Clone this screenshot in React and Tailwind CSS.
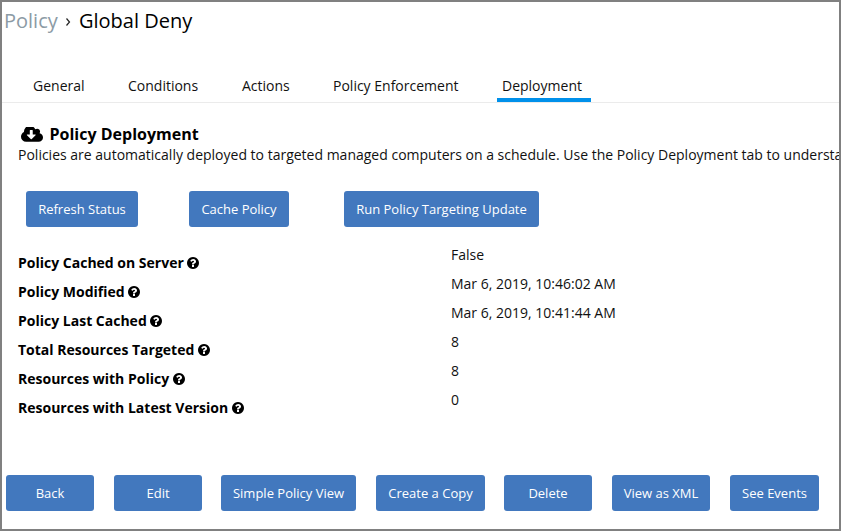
const tabs = [
  { label: "General", box: "w-[95px]" },
  { label: "Conditions", box: "w-[114px]" },
  { label: "Actions", box: "w-[91px]" },
  { label: "Policy Enforcement", box: "w-[169px]" },
  { label: "Deployment", box: "w-[94px]", active: true },
];

const details = [
  ["Policy Cached on Server", "False"],
  ["Policy Modified", "Mar 6, 2019, 10:46:02 AM"],
  ["Policy Last Cached", "Mar 6, 2019, 10:41:44 AM"],
  ["Total Resources Targeted", "8"],
  ["Resources with Policy", "8"],
  ["Resources with Latest Version", "0"],
];

const footer = [
  { label: "Back", box: "w-[88px]" },
  { label: "Edit", box: "w-[88px] ml-5" },
  { label: "Simple Policy View", box: "w-[135px] ml-[19px]" },
  { label: "Create a Copy", box: "w-[109px] ml-5" },
  { label: "Delete", box: "w-[88px] ml-[19px]" },
  { label: "View as XML", box: "w-[98px] ml-5" },
  { label: "See Events", box: "w-[89px] ml-5" },
];

function CloudIcon({ className }) {
  return (
    <svg className={className} viewBox="-64 256 1920 1280" fill="currentColor">
      <path d="M1216 928q0-14-9-23t-23-9h-224v-352q0-13-9.5-22.5t-22.5-9.5h-192q-13 0-22.5 9.5t-9.5 22.5v352h-224q-13 0-22.5 9.5t-9.5 22.5q0 14 9 23l352 352q9 9 23 9t23-9l351-351q10-12 10-24zm640 224q0 159-112.5 271.5t-271.5 112.5h-1088q-185 0-316.5-131.5t-131.5-316.5q0-130 70-240t188-165q-2-30-2-43 0-212 150-362t362-150q156 0 285.5 87t188.5 231q71-62 166-62 106 0 181 75t75 181q0 76-41 138 130 31 213.5 135.5t83.5 238.5z" />
    </svg>
  );
}

function HelpIcon({ className }) {
  return (
    <svg className={className} viewBox="128 128 1536 1536" fill="currentColor">
      <path d="M1024 1376v-192q0-14-9-23t-23-9h-192q-14 0-23 9t-9 23v192q0 14 9 23t23 9h192q14 0 23-9t9-23zm256-672q0-88-55.5-163t-138.5-116-170-41q-243 0-371 213-15 24 8 42l132 100q7 6 19 6 16 0 25-12 53-68 86-92 34-24 86-24 48 0 85.5 26t37.5 59q0 38-20 61t-68 45q-63 28-115.5 86.5t-52.5 125.5v36q0 14 9 23t23 9h192q14 0 23-9t9-23q0-19 21.5-49.5t54.5-49.5q32-18 49-28.5t46-35 44.5-48 28-60.5 12.5-81zm384 192q0 209-103 385.5t-279.5 279.5-385.5 103-385.5-103-279.5-279.5-103-385.5 103-385.5 279.5-279.5 385.5-103 385.5 103 279.5 279.5 103 385.5z" />
    </svg>
  );
}

function Button({ label, box }) {
  return (
    <button
      className={`h-9 shrink-0 rounded-[3px] bg-[#4278be] text-center text-[13px] leading-9 whitespace-nowrap text-white ${box}`}
    >
      {label}
    </button>
  );
}

export default function App() {
  return (
    <div className="flex h-[531px] w-[841px] flex-col overflow-hidden border-2 border-[#808080] bg-white font-['Open_Sans','Noto_Sans',sans-serif] text-sm text-black">
      <header className="flex h-[38px] shrink-0 items-center pl-[2px] text-xl whitespace-nowrap">
        <span className="w-[61px] text-[#8c9ba5]">Policy</span>
        <svg className="mt-[2px] w-[6px] text-[#222]" viewBox="0 0 6 10" height="10" fill="none" stroke="currentColor" strokeWidth="1.2">
          <path d="M1.5 1.5l3 3.5-3 3.5" />
        </svg>
        <h1 className="ml-2">Global Deny</h1>
      </header>

      <nav className="mt-[30px] flex h-[33px] shrink-0 border-b border-[#ebebeb] pl-[26px]">
        {tabs.map((tab) => (
          <a
            key={tab.label}
            className={`h-8 shrink-0 border-b-4 pl-[5px] leading-[32px] whitespace-nowrap text-[#111] ${tab.box} ${tab.active ? "border-[#0090ea]" : "border-transparent"}`}
          >
            {tab.label}
          </a>
        ))}
      </nav>

      <main className="flex min-h-0 grow flex-col pl-4">
        <div className="mt-5 flex h-[22px] items-center pl-[3px]">
          <CloudIcon className="h-[15px] w-[22px]" />
          <h2 className="ml-[6.5px] text-base font-bold">Policy Deployment</h2>
        </div>
        <p className="h-5 leading-5 whitespace-nowrap text-[#111]">
          Policies are automatically deployed to targeted managed computers on a schedule. Use the Policy Deployment tab to understand
        </p>

        <div className="mt-[26px] flex pl-2">
          <Button label="Refresh Status" box="w-[112px]" />
          <Button label="Cache Policy" box="w-[100px] ml-[51px]" />
          <Button label="Run Policy Targeting Update" box="w-[195px] ml-[55px]" />
        </div>

        <dl className="mt-[14px]">
          {details.map(([label, value]) => (
            <div key={label} className="flex h-[29px]">
              <dt className="flex w-[433px] items-center pt-[15px] leading-[14px] font-bold">
                {label}
                <HelpIcon className="ml-[3.5px] size-3" />
              </dt>
              <dd className="leading-[28px] text-[#111]">{value}</dd>
            </div>
          ))}
        </dl>
      </main>

      <footer className="flex h-[54px] shrink-0 pl-1">
        {footer.map((item) => (
          <Button key={item.label} {...item} />
        ))}
      </footer>
    </div>
  );
}
